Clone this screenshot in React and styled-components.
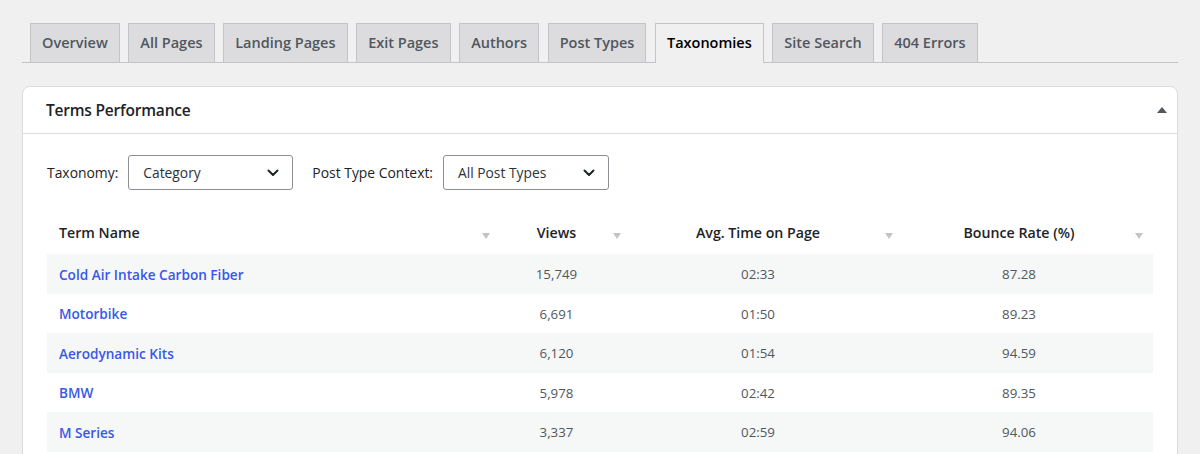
import React from "react";
import styled, { createGlobalStyle } from "styled-components";

const Global = createGlobalStyle`
  html, body { margin: 0; padding: 0; background: #f0f0f1; }
  body { font-family: "Open Sans", "Noto Sans", sans-serif; color: #3c434a; overflow: hidden; }
  * { box-sizing: border-box; }
`;

const Page = styled.div`
  padding: 23px 22px 0 22px;
`;

const TabBar = styled.nav`
  display: flex;
  gap: 8.6px;
  padding-left: 8px;
  border-bottom: 1px solid #c3c4c7;
`;

const Tab = styled.a`
  display: block;
  padding: 7px 11px;
  font-size: 14.5px;
  line-height: 24px;
  font-weight: 600;
  border: 1px solid #c3c4c7;
  border-bottom: none;
  margin-bottom: ${(p) => (p.$active ? "-1px" : "0")};
  background: ${(p) => (p.$active ? "#f0f0f1" : "#dcdcde")};
  color: ${(p) => (p.$active ? "#000" : "#50575e")};
  padding-bottom: ${(p) => (p.$active ? "8px" : "7px")};
  white-space: nowrap;
`;

const Card = styled.section`
  margin-top: 23px;
  background: #fff;
  border: 1px solid #dcdcde;
  border-radius: 8px 8px 0 0;
  height: 400px;
`;

const CardHeader = styled.header`
  display: flex;
  align-items: center;
  justify-content: space-between;
  height: 47px;
  padding: 0 10px 0 23px;
  border-bottom: 1px solid #dcdcde;
`;

const Title = styled.h2`
  margin: 0;
  font-size: 15.5px;
  font-weight: 600;
  color: #1d2327;
  letter-spacing: -0.2px;
`;

const Toggle = styled.span`
  width: 0;
  height: 0;
  border-left: 5px solid transparent;
  border-right: 5px solid transparent;
  border-bottom: 6px solid #50575e;
`;

const CardBody = styled.div`
  padding: 21px 24px 0 24px;
`;

const Filters = styled.div`
  display: flex;
  align-items: center;
`;

const Label = styled.label`
  font-size: 13.9px;
  color: #1d2327;
  margin-right: 10px;
`;

const Select = styled.div`
  display: flex;
  align-items: center;
  justify-content: space-between;
  width: ${(p) => p.$w}px;
  height: 35px;
  padding: 0 13px 0 14px;
  border: 1px solid #8c8f94;
  border-radius: 3px;
  font-size: 13.8px;
  color: #2c3338;
  margin-right: 19px;
`;

const Table = styled.table`
  width: 1106px;
  margin-top: 20px;
  border-collapse: collapse;
  table-layout: fixed;
`;

const Th = styled.th`
  position: relative;
  height: 44px;
  padding: 0 28px 0 ${(p) => (p.$left ? "12px" : "10px")};
  text-align: ${(p) => (p.$left ? "left" : "center")};
  font-size: 14.2px;
  font-weight: 600;
  color: #1d2327;
`;

const SortArrow = styled.span`
  position: absolute;
  right: 10px;
  top: 23px;
  width: 0;
  height: 0;
  border-left: 4px solid transparent;
  border-right: 4px solid transparent;
  border-top: 6px solid #c3c4c7;
`;

const Tr = styled.tr`
  background: ${(p) => (p.$striped ? "#f6f7f7" : "#fff")};
`;

const Td = styled.td`
  height: 39.5px;
  padding: 1px 28px 0 ${(p) => (p.$left ? "12px" : "10px")};
  text-align: ${(p) => (p.$left ? "left" : "center")};
  font-size: 13.3px;
  color: #50575e;
`;

const TermLink = styled.a`
  color: #3858e9;
  font-size: 13.6px;
  font-weight: 600;
  text-decoration: none;
`;

const Chevron = () => (
  <svg width="12" height="8" viewBox="0 0 12 8" fill="none">
    <path d="M1.5 1.5 L6 6 L10.5 1.5" stroke="#1d2327" strokeWidth="2" strokeLinecap="round" strokeLinejoin="round" />
  </svg>
);

const tabs = ["Overview", "All Pages", "Landing Pages", "Exit Pages", "Authors", "Post Types", "Taxonomies", "Site Search", "404 Errors"];

const rows = [
  ["Cold Air Intake Carbon Fiber", "15,749", "02:33", "87.28"],
  ["Motorbike", "6,691", "01:50", "89.23"],
  ["Aerodynamic Kits", "6,120", "01:54", "94.59"],
  ["BMW", "5,978", "02:42", "89.35"],
  ["M Series", "3,337", "02:59", "94.06"],
];

export default function App() {
  return (
    <>
      <Global />
      <Page>
        <TabBar>
          {tabs.map((t) => (
            <Tab key={t} $active={t === "Taxonomies"}>{t}</Tab>
          ))}
        </TabBar>
        <Card>
          <CardHeader>
            <Title>Terms Performance</Title>
            <Toggle />
          </CardHeader>
          <CardBody>
            <Filters>
              <Label>Taxonomy:</Label>
              <Select $w={165}>Category<Chevron /></Select>
              <Label>Post Type Context:</Label>
              <Select $w={166}>All Post Types<Chevron /></Select>
            </Filters>
            <Table>
              <colgroup>
                <col style={{ width: 453 }} />
                <col style={{ width: 131 }} />
                <col style={{ width: 272 }} />
                <col style={{ width: 250 }} />
              </colgroup>
              <thead>
                <tr>
                  <Th $left>Term Name<SortArrow /></Th>
                  <Th>Views<SortArrow /></Th>
                  <Th>Avg. Time on Page<SortArrow /></Th>
                  <Th>Bounce Rate (%)<SortArrow /></Th>
                </tr>
              </thead>
              <tbody>
                {rows.map((r, i) => (
                  <Tr key={r[0]} $striped={i % 2 === 0}>
                    <Td $left><TermLink href="#">{r[0]}</TermLink></Td>
                    <Td>{r[1]}</Td>
                    <Td>{r[2]}</Td>
                    <Td>{r[3]}</Td>
                  </Tr>
                ))}
              </tbody>
            </Table>
          </CardBody>
        </Card>
      </Page>
    </>
  );
}
